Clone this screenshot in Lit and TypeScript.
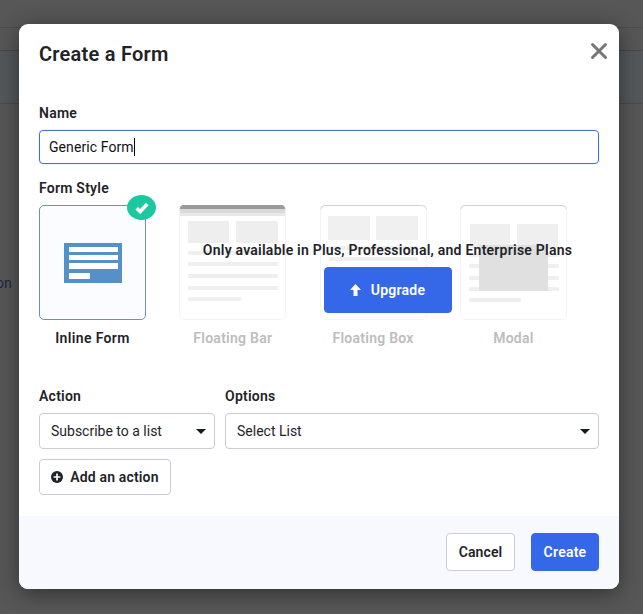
import { LitElement, html, css, svg } from "lit";
import { customElement, property } from "lit/decorators.js";

type Kind = "inline" | "bar" | "box" | "modal";

@customElement("style-card")
class StyleCard extends LitElement {
  @property() kind: Kind = "inline";
  @property() label = "";

  static styles = css`
    :host { display: block; width: 107px; }
    .card { position: relative; height: 115px; }
    .card svg { display: block; }
    .badge {
      position: absolute; left: 88px; top: -10px; width: 29px; height: 25px;
      border-radius: 50%; background: #1ac9a0;
      display: flex; align-items: center; justify-content: center;
    }
    .label {
      margin-top: 8px; line-height: 20px; text-align: center; white-space: nowrap;
      font-size: 14px; font-weight: 600; letter-spacing: .36px; color: #1f2327;
    }
    .muted { color: #bdbdbd; letter-spacing: .26px; }
  `;

  lines(ys: number[], last: number, fill = "#efefef") {
    return ys.map((y, i) => svg`<rect x="9" y=${y} width=${i === ys.length - 1 ? last : 90} height="4" rx="1" fill=${fill} />`);
  }

  frame() {
    return svg`<rect x=".5" y=".5" width="106" height="114" rx="4.5" fill="#fff" stroke="#f4f4f4"/>
      <path d="M.7 4.5Q1 .5 5 .5H102Q106 .5 106.3 4.5" fill="none" stroke="#d2d2d2"/>`;
  }

  art() {
    switch (this.kind) {
      case "inline":
        return svg`<rect x=".5" y=".5" width="106" height="114" rx="4.5" fill="#fafcff" stroke="#6790cc"/>
          <rect x="25" y="38" width="58" height="40" fill="#5590c8"/>
          <path d="M30 42h49v5H30zM30 50h49v5H30zM30 58h49v6H30zM30 68h21v6H30z" fill="#fff"/>`;
      case "bar":
        return svg`${this.frame()}
          <path d="M1 4h105v4H1z" fill="#dadada"/>
          <path d="M1 8h105v3H1z" fill="#e8e8e8"/>
          <path d="M1 4Q1 0 5 0H102Q106 0 106 4Z" fill="#9b9b9b"/>
          <path d="M9 16h41v22H9zM57 16h42v22H57z" fill="#eeeeee"/>
          ${this.lines([46, 57, 69, 81, 92], 53)}`;
      case "box":
        return svg`${this.frame()}
          <path d="M8 11h42v24H8zM56 11h42v24H56z" fill="#f0f0f0"/>
          ${this.lines([41, 52], 89)}`;
      default:
        return svg`${this.frame()}
          <path d="M10 19h40v24H10zM57 19h41v24H57z" fill="#efefef"/>
          ${this.lines([48, 59, 71, 82, 93], 52)}
          <rect x="19" y="40" width="69" height="46" fill="#e0e0e0"/>`;
    }
  }

  render() {
    const chosen = this.kind === "inline";
    return html`
      <div class="card">
        <svg width="107" height="115">${this.art()}</svg>
        ${chosen ? html`<div class="badge"><svg width="14" height="12" viewBox="0 0 14 12"><path d="M1.7 6.2 5.2 9.6 12.3 2" fill="none" stroke="#fff" stroke-width="3.6"/></svg></div>` : ""}
      </div>
      <div class="label ${chosen ? "" : "muted"}">${this.label}</div>`;
  }
}

@customElement("app-root")
class AppRoot extends LitElement {
  static styles = css`
    :host {
      display: block; position: relative; width: 643px; height: 614px; overflow: hidden;
      box-sizing: border-box; padding: 24px 24px 25px 19px; background: #575757;
      font-family: Roboto, "Liberation Sans", sans-serif; font-size: 14px; color: #1f2327;
    }
    * { box-sizing: border-box; }
    .page { position: absolute; inset: 0; }
    .rule { height: 24px; margin-top: 27px; border-top: 1px solid #4b4b4b; border-bottom: 1px solid #484848; }
    .band { height: 53px; background: #54585b; border-bottom: 1px solid #4a4a4a; }
    .behind { margin: 170px 0 0 -4px; line-height: 18px; color: #1f2450; }
    .dialog {
      position: relative; width: 600px; height: 565px; border-radius: 9px; background: #fff;
      display: flex; flex-direction: column; overflow: hidden;
    }
    .shade { position: relative; border-radius: 9px; width: 600px; box-shadow: 0 4px 22px rgba(0, 0, 0, .45); }
    .body { height: 492px; padding: 17px 20px 0; }
    .head { height: 52px; display: flex; justify-content: space-between; }
    .title { margin: 0; font-size: 20px; line-height: 26px; font-weight: 600; letter-spacing: .24px; }
    .close { margin: 1px -9px 0 0; width: 18px; height: 18px; }
    .label { font-weight: 600; line-height: 20px; letter-spacing: .24px; }
    .name { margin-top: 10px; }
    .field {
      margin-top: 7px; height: 34px; padding: 0 9px; border: 1px solid #4471cf; border-radius: 4px;
      box-shadow: 0 0 2px rgba(84, 151, 255, .35); display: flex; align-items: center; color: #111;
      letter-spacing: .08px;
    }
    .caret { width: 1px; height: 18px; background: #000; }
    .styles-label { margin-top: 14px; }
    .styles { position: relative; margin-top: 7px; display: flex; gap: 33.3px; }
    .offer {
      position: absolute; left: 140px; top: 35px; width: 417px;
      display: flex; flex-direction: column; align-items: center; gap: 7px;
    }
    .offer-text { line-height: 20px; font-weight: 600; letter-spacing: .24px; white-space: nowrap; }
    .btn {
      display: flex; align-items: center; justify-content: center; white-space: nowrap;
      font-weight: 600; letter-spacing: .24px; border-radius: 4px; border: 1px solid #c9cdd3; background: #fff;
    }
    .primary { background: #3468e8; border-color: #3468e8; color: #fff; }
    .upgrade { width: 128px; height: 46px; gap: 10px; }
    .row { margin-top: 38px; display: grid; grid-template-columns: 176px 374px; gap: 7px 10px; }
    .select {
      height: 36px; border: 1px solid #cacdd1; border-radius: 4px; padding: 0 8px 0 11px;
      display: flex; align-items: center; justify-content: space-between;
    }
    .add { margin-top: 10px; width: 132px; height: 36px; gap: 7px; letter-spacing: .16px; }
    .foot { flex: 1; background: #f7f9fe; padding: 17px 20px; display: flex; justify-content: flex-end; gap: 16px; }
    .cancel { width: 69px; height: 38px; letter-spacing: .1px; }
    .create { width: 68px; height: 38px; }
  `;

  arrow() {
    return html`<svg width="10" height="5"><path d="M0 0h10L5 5z" fill="#16191d"/></svg>`;
  }

  render() {
    return html`
      <div class="page"><div class="rule"></div><div class="band"></div><div class="behind">on</div></div>
      <div class="shade"><div class="dialog">
        <div class="body">
          <div class="head">
            <h1 class="title">Create a Form</h1>
            <svg class="close" viewBox="0 0 18 18"><path d="M2.5 2.5l13 13M15.5 2.5l-13 13" stroke="#767676" stroke-width="3" stroke-linecap="round"/></svg>
          </div>
          <div class="label name">Name</div>
          <div class="field"><span>Generic Form</span><span class="caret"></span></div>
          <div class="label styles-label">Form Style</div>
          <div class="styles">
            <style-card kind="inline" label="Inline Form"></style-card>
            <style-card kind="bar" label="Floating Bar"></style-card>
            <style-card kind="box" label="Floating Box"></style-card>
            <style-card kind="modal" label="Modal"></style-card>
            <div class="offer">
              <div class="offer-text">Only available in Plus, Professional, and Enterprise Plans</div>
              <div class="btn primary upgrade">
                <svg width="11" height="12"><path d="M5.5 0 11 6H7.5v6h-4V6H0z" fill="#fff"/></svg>
                <span>Upgrade</span>
              </div>
            </div>
          </div>
          <div class="row">
            <div class="label">Action</div><div class="label">Options</div>
            <div class="select"><span>Subscribe to a list</span>${this.arrow()}</div>
            <div class="select"><span>Select List</span>${this.arrow()}</div>
          </div>
          <div class="btn add">
            <svg width="12" height="12"><circle cx="6" cy="6" r="6" fill="#1f2327"/><path d="M6 2.6v6.8M2.6 6h6.8" stroke="#fff" stroke-width="1.7"/></svg>
            <span>Add an action</span>
          </div>
        </div>
        <div class="foot">
          <div class="btn cancel">Cancel</div>
          <div class="btn primary create">Create</div>
        </div>
      </div></div>`;
  }
}
